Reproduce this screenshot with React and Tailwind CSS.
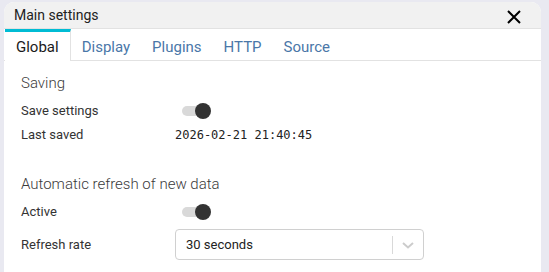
import { useState } from 'react';

const Toggle = ({ on, onChange }) => (
  <button
    type="button"
    onClick={() => onChange(!on)}
    className="relative ml-[7px] h-4 w-[30px] flex items-center"
  >
    <span className="h-[10px] w-[26px] rounded-full bg-[#d9d9d9]" />
    <span
      className={`absolute top-0 h-4 w-4 rounded-full bg-[#333333] ${on ? 'left-[13px]' : 'left-0'}`}
    />
  </button>
);

const Row = ({ label, children }) => (
  <div className="flex items-center h-6">
    <div className="w-[154px] shrink-0 text-[13px] text-[#333]">{label}</div>
    {children}
  </div>
);

export default function App() {
  const [tab, setTab] = useState('Global');
  const [saveOn, setSaveOn] = useState(true);
  const [active, setActive] = useState(true);
  const tabs = ['Global', 'Display', 'Plugins', 'HTTP', 'Source'];

  return (
    <div className="h-[272px] overflow-hidden bg-[#e9e9f1] pl-1 pr-2 pt-[2px]" style={{ fontFamily: 'Roboto, "Liberation Sans", sans-serif' }}>
      <div className="h-[290px] rounded-t-[10px] bg-white overflow-hidden">
        {/* Header */}
        <div className="flex h-[27px] items-center justify-between bg-[#f1f1f1] border-b border-[#e2e2e2] pl-[10px] pr-[20px]">
          <span className="text-[14px] text-[#222]">Main settings</span>
          <svg width="14" height="14" viewBox="0 0 14 14" className="mt-[3px]">
            <path d="M1 1L13 13M13 1L1 13" stroke="#000" strokeWidth="2" />
          </svg>
        </div>

        {/* Tabs */}
        <div className="flex h-[32px] border-b border-[#e2e2e2] pl-px">
          {tabs.map((t) => (
            <button
              key={t}
              type="button"
              onClick={() => setTab(t)}
              className={`h-[32px] px-[11px] pt-[2px] text-[15px] border-t-[3px] ${
                tab === t
                  ? 'border-[#00bcd4] border-r border-r-[#e2e2e2] bg-white text-[#1a1a1a] -mb-px'
                  : 'border-transparent text-[#4a77a8]'
              }`}
            >
              {t}
            </button>
          ))}
        </div>

        {/* Body */}
        <div className="pl-[17px] pt-[12px]">
          <div className="text-[15px] font-light text-[#3a3a3a] leading-[20px]">Saving</div>
          <div className="mt-[6px]">
            <Row label="Save settings">
              <Toggle on={saveOn} onChange={setSaveOn} />
            </Row>
            <Row label="Last saved">
              <span className="text-[12px] text-[#222]" style={{ fontFamily: '"DejaVu Sans Mono", monospace' }}>
                2026-02-21 21:40:45
              </span>
            </Row>
          </div>

          <div className="mt-[27px] text-[15px] font-light text-[#3a3a3a] leading-[20px]">Automatic refresh of new data</div>
          <div className="mt-[6px]">
            <Row label="Active">
              <Toggle on={active} onChange={setActive} />
            </Row>
            <div className="flex items-center mt-[5px]">
              <div className="w-[154px] shrink-0 text-[13px] text-[#333]">Refresh rate</div>
              <div className="flex h-[31px] w-[249px] items-center rounded border border-[#d0d0d0] bg-white">
                <span className="flex-1 pl-[10px] text-[13px] text-[#222]">30 seconds</span>
                <span className="h-[18px] w-px bg-[#d9d9d9]" />
                <svg width="30" height="14" viewBox="0 0 30 14">
                  <path d="M10 5l5 4.5 5-4.5" fill="none" stroke="#cccccc" strokeWidth="2" />
                </svg>
              </div>
            </div>
          </div>
        </div>
      </div>
    </div>
  );
}
